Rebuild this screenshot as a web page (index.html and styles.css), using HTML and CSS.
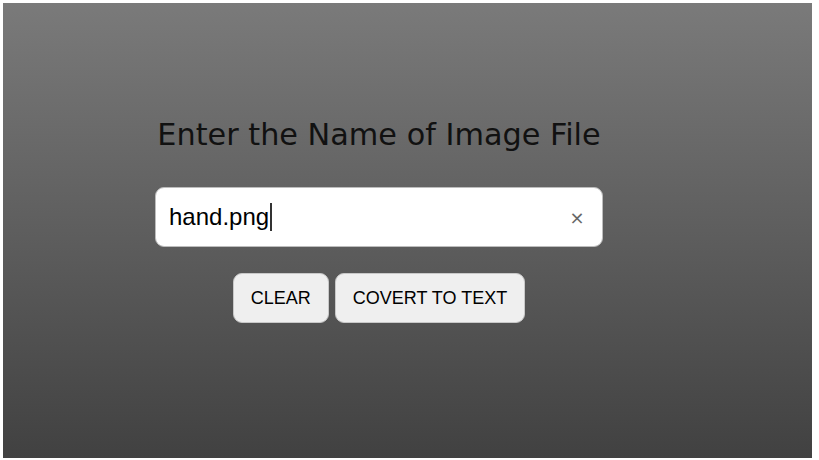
FILE: index.html
```html
<!DOCTYPE html>
<html>
<head>
<meta charset="utf-8">
<link rel="stylesheet" href="styles.css">
</head>
<body>
<main class="stage">
  <h1 class="title">Enter the Name of Image File</h1>
  <div class="field">
    <span class="value">hand.png</span><span class="caret"></span>
    <button class="clear-x" type="button" aria-label="Clear">×</button>
  </div>
  <div class="actions">
    <button class="btn" type="button">CLEAR</button>
    <button class="btn" type="button">COVERT TO TEXT</button>
  </div>
</main>
</body>
</html>
```
FILE: styles.css
```css
html, body {
  margin: 0;
  padding: 0;
  background: #ffffff;
}
body {
  padding: 3px 7px 2px 3px;
  height: 460px;
  box-sizing: border-box;
}
.stage {
  height: 455px;
  background: linear-gradient(to bottom, #7a7a7a 0%, #5e5e5e 50%, #414141 100%);
  display: flex;
  flex-direction: column;
  align-items: center;
  padding: 112px 57px 0 0;
  box-sizing: border-box;
}
.title {
  margin: 0;
  font-family: "DejaVu Sans", Verdana, sans-serif;
  font-weight: normal;
  font-size: 30.3px;
  line-height: 40px;
  color: #111111;
  letter-spacing: 0;
}
.field {
  margin-top: 32px;
  width: 448px;
  height: 60px;
  box-sizing: border-box;
  background: #ffffff;
  border: 1px solid #bdbdbd;
  border-radius: 9px;
  display: flex;
  align-items: center;
  padding: 0 14px 0 13px;
}
.value {
  font-family: "Liberation Sans", Arial, sans-serif;
  font-size: 24px;
  color: #000;
}
.caret {
  width: 2px;
  height: 28px;
  background: #333;
  margin-left: 1px;
}
.clear-x {
  margin-left: auto;
  border: 0;
  background: transparent;
  font-family: "DejaVu Sans", sans-serif;
  font-size: 18px;
  color: #666;
  padding: 0;
  width: 22px;
}
.actions {
  margin-top: 26px;
  display: flex;
  gap: 6px;
}
.btn {
  height: 50px;
  box-sizing: border-box;
  background: #efefef;
  border: 1px solid #c8c8c8;
  border-radius: 9px;
  font-family: "Liberation Sans", Arial, sans-serif;
  font-size: 18px;
  color: #000;
  padding: 0 17px;
}
```
